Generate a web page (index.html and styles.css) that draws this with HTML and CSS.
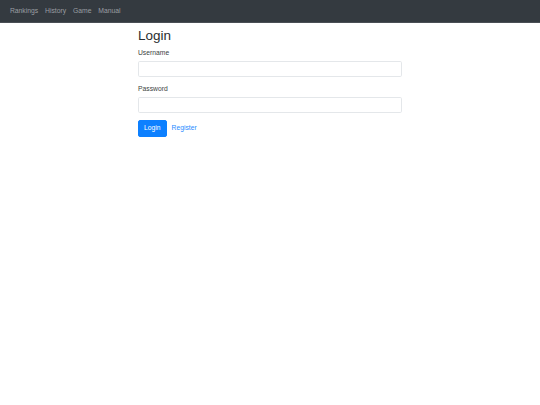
FILE: index.html
```html
<!DOCTYPE html>
<html>
<head>
<meta charset="utf-8">
<link rel="stylesheet" href="styles.css">
</head>
<body>
<nav class="navbar">
  <a class="nav-link" href="#">Rankings</a>
  <a class="nav-link" href="#">History</a>
  <a class="nav-link" href="#">Game</a>
  <a class="nav-link" href="#">Manual</a>
</nav>
<main class="container">
  <h2 class="title">Login</h2>
  <form class="form">
    <div class="form-group">
      <label class="label">Username</label>
      <input class="input" type="text">
    </div>
    <div class="form-group">
      <label class="label">Password</label>
      <input class="input" type="password">
    </div>
    <div class="actions">
      <button class="btn" type="button">Login</button>
      <a class="link" href="#">Register</a>
    </div>
  </form>
</main>
</body>
</html>
```

FILE: styles.css
```css
* { box-sizing: border-box; }
html, body { margin: 0; padding: 0; }
body {
  font-family: "Liberation Sans", Arial, sans-serif;
  font-size: 6.75px;
  line-height: 1.5;
  color: #3c3f42;
  background: #fff;
  width: 540px;
  height: 405px;
}
.navbar {
  background: #343a40;
  height: 23px;
  display: flex;
  align-items: center;
  padding: 0 6.5px;
  border-bottom: 1px solid #4a4f55;
}
.nav-link {
  color: #9a9ea2;
  text-decoration: none;
  padding: 0 3.4px;
  font-size: 6.8px;
}
.container {
  width: 264px;
  margin: 0 auto;
  padding-top: 5px;
}
.title {
  margin: 0 0 3.4px 0;
  font-size: 13.5px;
  font-weight: 500;
  line-height: 1.2;
  color: #2a2d30;
}
.form-group {
  margin-bottom: 6.75px;
}
.label {
  display: block;
  margin-bottom: 3.4px;
}
.input {
  display: block;
  width: 100%;
  height: 16px;
  border: 1px solid #e4e7ea;
  border-radius: 1.7px;
  background: #fff;
  padding: 0 5px;
  font: inherit;
  outline: none;
}
.actions {
  display: flex;
  align-items: center;
}
.btn {
  background: #0d80ff;
  border: 1px solid #0d80ff;
  color: #fff;
  font: inherit;
  line-height: 1.5;
  padding: 2.2px 5px;
  border-radius: 2px;
  height: 16.5px;
}
.link {
  color: #2a8bff;
  text-decoration: none;
  margin-left: 5px;
}
```
